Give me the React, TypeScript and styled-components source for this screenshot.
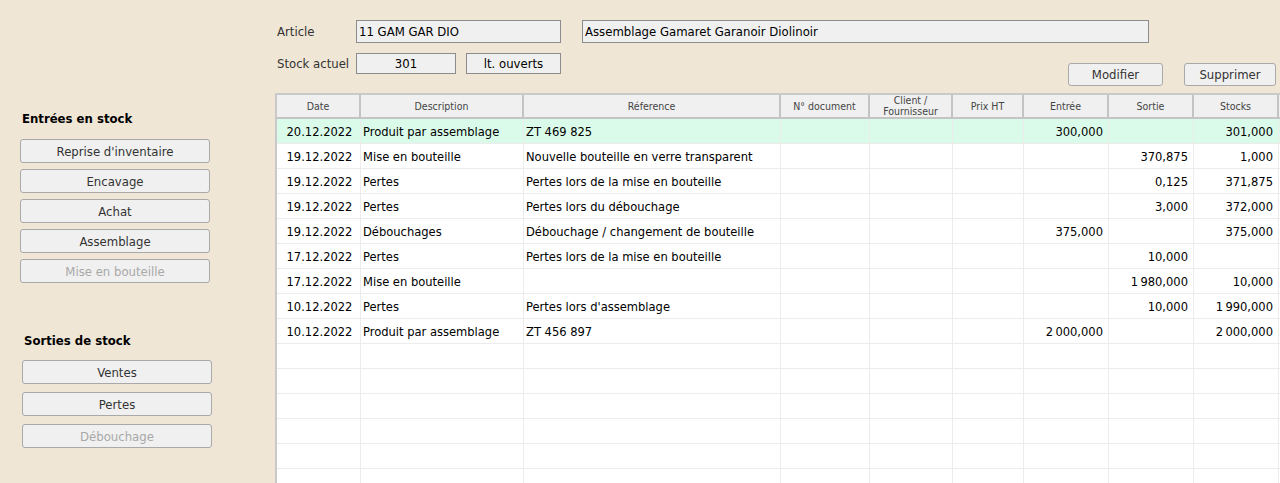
import React from "react";
import styled, { createGlobalStyle } from "styled-components";

const FONT = `"DejaVu Sans Condensed", "DejaVu Sans", Verdana, sans-serif`;

const Global = createGlobalStyle`
  html, body { margin: 0; padding: 0; background: #efe6d5; }
  body { font-family: ${FONT}; font-size: 13px; color: #000; height: 483px; overflow: hidden; }
  * { box-sizing: border-box; }
`;

const Page = styled.div`
  display: flex;
  height: 483px;
  overflow: hidden;
`;

const Sidebar = styled.aside`
  width: 275px;
  flex: none;
  padding-top: 111px;
  display: flex;
  flex-direction: column;
  gap: 50px;
`;

const Group = styled.section<{ $indent: number; $gap: number }>`
  display: flex;
  flex-direction: column;
  gap: ${(p) => p.$gap}px;
  padding-left: ${(p) => p.$indent}px;
`;

const GroupTitle = styled.h3<{ $space: number }>`
  margin: 0 0 ${(p) => p.$space}px 2px;
  font-size: 13px;
  font-weight: bold;
  line-height: 16px;
  color: #000;
`;

const SideButton = styled.button`
  width: 190px;
  height: 24px;
  background: #f0f0f0;
  border: 1px solid #a9a9a9;
  border-radius: 3px;
  font-family: ${FONT};
  font-size: 13px;
  color: ${(p) => (p.disabled ? "#a8a8a8" : "#333")};
  padding: 0;
`;

const Main = styled.main`
  flex: 1;
  display: flex;
  flex-direction: column;
  min-width: 0;
`;

const Top = styled.div`
  height: 93px;
  display: grid;
  grid-template-columns: 1fr;
  grid-template-rows: 1fr;
  padding-left: 2px;
`;

const Fields = styled.div`
  grid-area: 1 / 1;
  padding-top: 20px;
  display: flex;
  flex-direction: column;
  gap: 10px;
`;

const FieldRow = styled.div`
  display: flex;
  align-items: center;
`;

const Label = styled.label`
  width: 79px;
  color: #333;
  font-size: 13px;
`;

const Inputs = styled.div<{ $gap: number }>`
  display: flex;
  gap: ${(p) => p.$gap}px;
`;

const Input = styled.div<{ $w: number; $h: number; $center?: boolean }>`
  width: ${(p) => p.$w}px;
  height: ${(p) => p.$h}px;
  background: #f0f0f0;
  border: 1px solid #8c8c8c;
  display: flex;
  align-items: center;
  justify-content: ${(p) => (p.$center ? "center" : "flex-start")};
  padding: 0 2px;
  font-size: 13px;
  color: #000;
  white-space: nowrap;
`;

const Actions = styled.div`
  grid-area: 1 / 1;
  justify-self: end;
  align-self: end;
  margin-bottom: 7px;
  margin-right: 4px;
  display: flex;
  gap: 21px;
`;

const ActionButton = styled.button<{ $w: number }>`
  width: ${(p) => p.$w}px;
  height: 23px;
  background: #f0f0f0;
  border: 1px solid #a9a9a9;
  border-radius: 3px;
  font-family: ${FONT};
  font-size: 13px;
  color: #333;
  padding: 0;
`;

const COLS = "84px 163px 257px 89px 83px 71px 85px 85px 85px";

const Table = styled.div`
  flex: 1;
  background: #fff;
  border-top: 2px solid #c9c9c9;
  border-left: 2px solid #c9c9c9;
  overflow: hidden;
`;

const HeadRow = styled.div`
  display: grid;
  grid-template-columns: ${COLS};
  height: 24px;
  background: #f0f0f0;
  border-bottom: 2px solid #c4c4c4;
`;

const HeadCell = styled.div`
  border-right: 2px solid #c4c4c4;
  display: flex;
  align-items: center;
  justify-content: center;
  text-align: center;
  font-size: 10.5px;
  line-height: 11px;
  color: #444;
`;

const Row = styled.div<{ $selected?: boolean }>`
  display: grid;
  grid-template-columns: ${COLS};
  height: 25px;
  background: ${(p) => (p.$selected ? "#dbfbea" : "#fff")};
  border-bottom: 1px solid #ececec;
`;

const Cell = styled.div<{ $align: "left" | "center" | "right" }>`
  border-right: 1px solid #ececec;
  display: flex;
  align-items: center;
  justify-content: ${(p) =>
    p.$align === "right" ? "flex-end" : p.$align === "center" ? "center" : "flex-start"};
  padding: ${(p) => (p.$align === "right" ? "0 5px 0 0" : "0 0 0 2px")};
  font-size: 12.8px;
  color: #000;
  white-space: nowrap;
  overflow: hidden;
`;

type Entry = {
  date: string;
  desc: string;
  ref: string;
  entree: string;
  sortie: string;
  stock: string;
};

const data: Entry[] = [
  { date: "20.12.2022", desc: "Produit par assemblage", ref: "ZT 469 825", entree: "300,000", sortie: "", stock: "301,000" },
  { date: "19.12.2022", desc: "Mise en bouteille", ref: "Nouvelle bouteille en verre transparent", entree: "", sortie: "370,875", stock: "1,000" },
  { date: "19.12.2022", desc: "Pertes", ref: "Pertes lors de la mise en bouteille", entree: "", sortie: "0,125", stock: "371,875" },
  { date: "19.12.2022", desc: "Pertes", ref: "Pertes lors du débouchage", entree: "", sortie: "3,000", stock: "372,000" },
  { date: "19.12.2022", desc: "Débouchages", ref: "Débouchage / changement de bouteille", entree: "375,000", sortie: "", stock: "375,000" },
  { date: "17.12.2022", desc: "Pertes", ref: "Pertes lors de la mise en bouteille", entree: "", sortie: "10,000", stock: "" },
  { date: "17.12.2022", desc: "Mise en bouteille", ref: "", entree: "", sortie: "1\u2009980,000", stock: "10,000" },
  { date: "10.12.2022", desc: "Pertes", ref: "Pertes lors d'assemblage", entree: "", sortie: "10,000", stock: "1\u2009990,000" },
  { date: "10.12.2022", desc: "Produit par assemblage", ref: "ZT 456 897", entree: "2\u2009000,000", sortie: "", stock: "2\u2009000,000" },
];

const headers = [
  "Date",
  "Description",
  "Réference",
  "N° document",
  <>Client /<br />Fournisseur</>,
  "Prix HT",
  "Entrée",
  "Sortie",
  "Stocks",
];

export default function App() {
  const empty = 6;
  return (
    <>
      <Global />
      <Page>
        <Sidebar>
          <Group $indent={20} $gap={6}>
            <GroupTitle $space={6}>Entrées en stock</GroupTitle>
            <SideButton>Reprise d'inventaire</SideButton>
            <SideButton>Encavage</SideButton>
            <SideButton>Achat</SideButton>
            <SideButton>Assemblage</SideButton>
            <SideButton disabled>Mise en bouteille</SideButton>
          </Group>
          <Group $indent={22} $gap={8}>
            <GroupTitle $space={3}>Sorties de stock</GroupTitle>
            <SideButton>Ventes</SideButton>
            <SideButton>Pertes</SideButton>
            <SideButton disabled>Débouchage</SideButton>
          </Group>
        </Sidebar>
        <Main>
          <Top>
            <Fields>
              <FieldRow>
                <Label>Article</Label>
                <Inputs $gap={21}>
                  <Input $w={205} $h={23}>11 GAM GAR DIO</Input>
                  <Input $w={567} $h={23}>Assemblage Gamaret Garanoir Diolinoir</Input>
                </Inputs>
              </FieldRow>
              <FieldRow>
                <Label>Stock actuel</Label>
                <Inputs $gap={10}>
                  <Input $w={100} $h={21} $center>301</Input>
                  <Input $w={95} $h={21} $center>lt. ouverts</Input>
                </Inputs>
              </FieldRow>
            </Fields>
            <Actions>
              <ActionButton $w={95}>Modifier</ActionButton>
              <ActionButton $w={92}>Supprimer</ActionButton>
            </Actions>
          </Top>
          <Table>
            <HeadRow>
              {headers.map((h, i) => (
                <HeadCell key={i}>{h}</HeadCell>
              ))}
            </HeadRow>
            {data.map((d, i) => (
              <Row key={i} $selected={i === 0}>
                <Cell $align="center">{d.date}</Cell>
                <Cell $align="left">{d.desc}</Cell>
                <Cell $align="left">{d.ref}</Cell>
                <Cell $align="left" />
                <Cell $align="left" />
                <Cell $align="right" />
                <Cell $align="right">{d.entree}</Cell>
                <Cell $align="right">{d.sortie}</Cell>
                <Cell $align="right">{d.stock}</Cell>
              </Row>
            ))}
            {Array.from({ length: empty }).map((_, i) => (
              <Row key={`e${i}`}>
                {Array.from({ length: 9 }).map((__, j) => (
                  <Cell key={j} $align="left" />
                ))}
              </Row>
            ))}
          </Table>
        </Main>
      </Page>
    </>
  );
}
